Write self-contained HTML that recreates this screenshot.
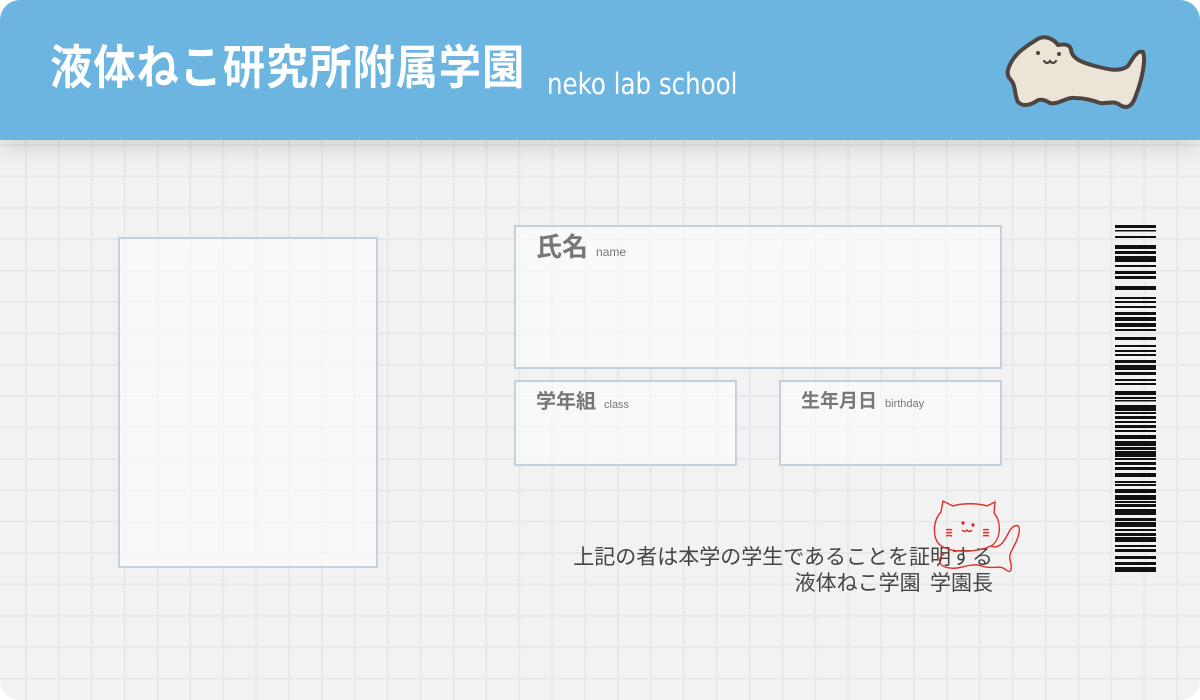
<!DOCTYPE html>
<html><head><meta charset="utf-8"><style>
html,body{margin:0;padding:0;width:1200px;height:700px;overflow:hidden;background:#fff}
.card{position:absolute;left:0;top:0;width:1200px;height:700px;border-radius:20px;overflow:hidden;
background-color:#f2f2f2;
background-image:linear-gradient(to right,#e8e8e8 0,#e8e8e8 2px,transparent 2px),linear-gradient(to bottom,#e8e8e8 0,#e8e8e8 2px,transparent 2px);
background-size:32.9px 31.4px;background-position:25px 144px;}
.hdr{position:absolute;left:0;top:0;width:1200px;height:140px;background:#6db5e1;box-shadow:0 8px 22px rgba(0,0,0,0.13)}
.title{position:absolute;left:50px;top:34px;color:#fff;font-family:"Noto Sans CJK JP",sans-serif;font-weight:700;font-size:47px;letter-spacing:1px;transform:scaleX(0.9);transform-origin:left;white-space:nowrap;line-height:60px}
.sub{position:absolute;left:547px;top:64px;color:#fff;font-family:"DejaVu Sans Condensed","Liberation Sans Narrow","Liberation Sans",sans-serif;font-size:29px;line-height:40px;white-space:nowrap;transform:scaleX(0.94);transform-origin:left}
.box{position:absolute;border:2px solid #c2d1dc;background:rgba(255,255,255,0.55);box-sizing:border-box}
.lab{position:absolute;font-family:"Noto Sans CJK JP",sans-serif;font-weight:700;color:#777;white-space:nowrap}
.lab small{font-family:"Liberation Sans",sans-serif;font-weight:400;font-size:12px;margin-left:8px;color:#777}
.cert{position:absolute;right:207px;top:543px;text-align:right;font-family:"Noto Sans CJK JP",sans-serif;font-size:21px;line-height:26px;color:#444;white-space:nowrap}
</style></head><body>
<div class="card">
<div class="hdr">
<div class="title">液体ねこ研究所附属学園</div>
<div class="sub">neko lab school</div>
<svg style="position:absolute;left:995px;top:25px" width="160" height="95" viewBox="995 25 160 95">
<path d="M1008 70 C1012 55 1025 47 1036 40 C1043 35 1052 37 1058 45 C1064 44 1070 44 1071 50 C1072 58 1080 62 1095 66 C1110 70 1120 72 1128 66 C1134 56 1138 50 1143 52 C1146 60 1142 80 1136 95 C1133 105 1128 110 1120 105 C1113 100 1108 104 1100 103 C1092 100 1082 98 1075 98 C1066 97 1058 105 1050 103 C1045 100 1040 98 1035 102 C1028 106 1022 106 1018 102 C1014 94 1016 86 1011 80 C1008 77 1007 74 1008 70 Z" fill="#ebe5d8" stroke="#4e4541" stroke-width="4" stroke-linejoin="round"/>
<circle cx="1038" cy="53" r="2" fill="#4e4541"/><circle cx="1059" cy="54" r="2" fill="#4e4541"/>
<path d="M1044 61 q3 4 6 0 q3 4 6 0" fill="none" stroke="#4e4541" stroke-width="2.2" stroke-linecap="round"/>
</svg>
</div>
<div class="box" style="left:118px;top:237px;width:260px;height:331px"></div>
<div class="box" style="left:514px;top:225px;width:488px;height:144px"></div>
<div class="box" style="left:514px;top:380px;width:223px;height:86px"></div>
<div class="box" style="left:779px;top:380px;width:223px;height:86px"></div>
<div class="lab" style="left:536px;top:228px;font-size:26px;line-height:36px">氏名<small>name</small></div>
<div class="lab" style="left:536px;top:386px;font-size:20px;line-height:28px">学年組<small style="font-size:11px">class</small></div>
<div class="lab" style="left:801px;top:386px;font-size:19px;line-height:28px">生年月日<small style="font-size:11px">birthday</small></div>
<div class="cert">上記の者は本学の学生であることを証明する<br>液体ねこ学園&nbsp; 学園長</div>
<svg style="position:absolute;left:920px;top:490px" width="110" height="100" viewBox="920 490 110 100" fill="none" stroke="#e0302c" stroke-width="1.4">
<path d="M941 512 L943 501 L953 506 C962 503 978 503 987 506 L995 502 L994 513 C1002 522 1001 540 991 546 C976 553 950 553 940 545 C932 538 933 520 941 512 Z"/>
<path d="M991 546 C1000 550 1005 540 1010 530 C1014 525 1021 522 1019 533 C1017 545 1008 552 1010 560 C1012 566 1012 575 1006 570 C1000 564 992 570 982 566 C970 562 960 570 950 568 C940 567 935 560 945 553"/>
<circle cx="963" cy="523" r="1" fill="#e0302c"/><circle cx="973" cy="525" r="1" fill="#e0302c"/>
<path d="M962 530 q2.5 3 5 0 q2.5 3 5 0"/>
<path d="M946 530 q3 -1 6 0 M946 533 q3 -1 6 0 M946 536 q3 -1 6 0 M983 530 q3 -1 6 0 M983 533 q3 -1 6 0 M983 536 q3 -1 6 0"/>
</svg>
<svg style="position:absolute;left:1115px;top:220px" width="42" height="360" viewBox="0 220 42 360" fill="#111">
<rect y="225" width="41" height="3"/><rect y="230" width="41" height="1.5"/><rect y="236" width="41" height="2"/><rect y="245" width="41" height="4"/><rect y="251" width="41" height="3"/><rect y="256" width="41" height="6"/><rect y="265" width="41" height="2"/><rect y="271" width="41" height="3"/><rect y="276" width="41" height="3"/><rect y="286" width="41" height="4"/><rect y="297" width="41" height="2"/><rect y="301" width="41" height="2"/><rect y="306" width="41" height="2"/><rect y="312" width="41" height="3"/><rect y="317" width="41" height="4"/><rect y="323" width="41" height="4"/><rect y="329" width="41" height="2"/><rect y="337" width="41" height="3"/><rect y="345" width="41" height="2"/><rect y="350" width="41" height="2"/><rect y="354" width="41" height="2"/><rect y="360" width="41" height="3"/><rect y="365" width="41" height="5"/><rect y="372" width="41" height="3"/><rect y="379" width="41" height="2"/><rect y="383" width="41" height="2"/><rect y="391" width="41" height="4"/><rect y="397" width="41" height="2"/><rect y="400" width="41" height="1.5"/><rect y="405" width="41" height="6"/><rect y="412" width="41" height="2"/><rect y="416" width="41" height="3"/><rect y="421" width="41" height="2"/><rect y="425" width="41" height="3"/><rect y="430" width="41" height="2"/><rect y="435" width="41" height="4"/><rect y="441" width="41" height="5"/><rect y="447" width="41" height="3"/><rect y="451" width="41" height="6"/><rect y="458" width="41" height="2"/><rect y="462" width="41" height="3"/><rect y="467" width="41" height="3"/><rect y="473" width="41" height="4"/><rect y="481" width="41" height="2"/><rect y="484" width="41" height="2"/><rect y="489" width="41" height="4"/><rect y="495" width="41" height="5"/><rect y="501" width="41" height="2"/><rect y="504" width="41" height="3"/><rect y="509" width="41" height="6"/><rect y="518" width="41" height="3"/><rect y="522" width="41" height="5"/><rect y="529" width="41" height="2"/><rect y="533" width="41" height="3"/><rect y="537" width="41" height="5"/><rect y="545" width="41" height="2"/><rect y="549" width="41" height="3"/><rect y="556" width="41" height="3"/><rect y="562" width="41" height="3"/><rect y="567" width="41" height="5"/>
</svg>
</div>
</body></html>
